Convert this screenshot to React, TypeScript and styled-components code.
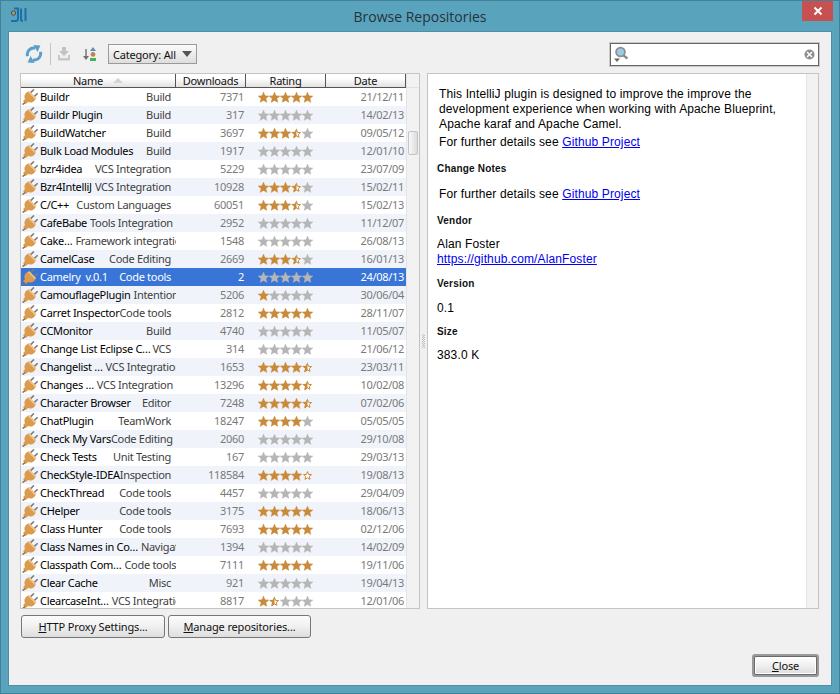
import React from 'react';
import styled, { createGlobalStyle } from 'styled-components';

interface Plugin {
  name: string;
  category: string;
  downloads: number;
  rating: number;
  date: string;
  tight?: boolean;
}

const plugins: Plugin[] = [
  { name: 'Buildr', category: 'Build', downloads: 7371, rating: 5, date: '21/12/11' },
  { name: 'Buildr Plugin', category: 'Build', downloads: 317, rating: 0, date: '14/02/13' },
  { name: 'BuildWatcher', category: 'Build', downloads: 3697, rating: 3.5, date: '09/05/12' },
  { name: 'Bulk Load Modules', category: 'Build', downloads: 1917, rating: 0, date: '12/01/10' },
  { name: 'bzr4idea', category: 'VCS Integration', downloads: 5229, rating: 0, date: '23/07/09' },
  { name: 'Bzr4IntelliJ', category: 'VCS Integration', downloads: 10928, rating: 3.5, date: '15/02/11' },
  { name: 'C/C++', category: 'Custom Languages', downloads: 60051, rating: 3.5, date: '15/02/13' },
  { name: 'CafeBabe', category: 'Tools Integration', downloads: 2952, rating: 0, date: '11/12/07' },
  { name: 'Cake…', category: 'Framework integration', downloads: 1548, rating: 0, date: '26/08/13' },
  { name: 'CamelCase', category: 'Code Editing', downloads: 2669, rating: 3.5, date: '16/01/13' },
  { name: 'Camelry  v.0.1', category: 'Code tools', downloads: 2, rating: 0, date: '24/08/13' },
  { name: 'CamouflagePlugin', category: 'Intention', downloads: 5206, rating: 1, date: '30/06/04' },
  { name: 'Carret Inspector', category: 'Code tools', downloads: 2812, rating: 5, date: '28/11/07', tight: true },
  { name: 'CCMonitor', category: 'Build', downloads: 4740, rating: 0, date: '11/05/07' },
  { name: 'Change List Eclipse C…', category: 'VCS', downloads: 314, rating: 0, date: '21/06/12', tight: true },
  { name: 'Changelist …', category: 'VCS Integration', downloads: 1653, rating: 4.5, date: '23/03/11' },
  { name: 'Changes …', category: 'VCS Integration', downloads: 13296, rating: 4.5, date: '10/02/08' },
  { name: 'Character Browser', category: 'Editor', downloads: 7248, rating: 4.5, date: '07/02/06' },
  { name: 'ChatPlugin', category: 'TeamWork', downloads: 18247, rating: 4, date: '05/05/05' },
  { name: 'Check My Vars', category: 'Code Editing', downloads: 2060, rating: 0, date: '29/10/08', tight: true },
  { name: 'Check Tests', category: 'Unit Testing', downloads: 167, rating: 0, date: '29/03/13' },
  { name: 'CheckStyle-IDEA', category: 'Inspection', downloads: 118584, rating: 4.25, date: '19/08/13', tight: true },
  { name: 'CheckThread', category: 'Code tools', downloads: 4457, rating: 0, date: '29/04/09' },
  { name: 'CHelper', category: 'Code tools', downloads: 3175, rating: 5, date: '18/06/13' },
  { name: 'Class Hunter', category: 'Code tools', downloads: 7693, rating: 5, date: '02/12/06' },
  { name: 'Class Names in Co…', category: 'Navigation', downloads: 1394, rating: 0, date: '14/02/09' },
  { name: 'Classpath Com…', category: 'Code tools', downloads: 7111, rating: 5, date: '19/11/06' },
  { name: 'Clear Cache', category: 'Misc', downloads: 921, rating: 0, date: '19/04/13' },
  { name: 'ClearcaseInt…', category: 'VCS Integration', downloads: 8817, rating: 1.5, date: '12/01/06' },
];

const GlobalStyle = createGlobalStyle`
  html, body {
    margin: 0;
    padding: 0;
    background: #5aa3bc;
  }
`;

const Frame = styled.div`
  width: 840px;
  height: 694px;
  box-sizing: border-box;
  display: flex;
  flex-direction: column;
  background: #5aa3bc;
  border: 1px solid #43809a;
  overflow: hidden;
`;

const TitleBar = styled.div`
  position: relative;
  height: 30px;
  flex: none;
  display: flex;
  align-items: center;
  justify-content: center;
  font: 14px 'Open Sans', sans-serif;
  color: #26343a;
`;

const AppIcon = styled.svg`
  position: absolute;
  left: 9px;
  top: 6px;
`;

const CloseCross = styled.button`
  position: absolute;
  right: 6px;
  top: 0;
  width: 31px;
  height: 20px;
  padding: 0;
  border: none;
  background: #c75050;
  display: flex;
  align-items: center;
  justify-content: center;
`;

const Client = styled.div`
  flex: 1;
  margin: 0 7px 7px;
  background: #f0f0f0;
  border: 1px solid #4d8da6;
  display: flex;
  flex-direction: column;
  min-height: 0;
  padding: 0 12px 8px 11px;
`;

const Toolbar = styled.div`
  height: 41px;
  flex: none;
  display: flex;
  align-items: center;
  padding: 3px 0 0 5px;
  box-sizing: border-box;
`;

const ToolIcon = styled.svg<{ $gap: number }>`
  margin-right: ${(p) => p.$gap}px;
  flex: none;
`;

const Divider = styled.div`
  width: 1px;
  height: 22px;
  background: #c4c4c4;
  margin-right: 6px;
`;

const CategorySelect = styled.div`
  width: 89px;
  height: 20px;
  box-sizing: border-box;
  border: 1px solid #9a9a9a;
  background: linear-gradient(#fbfbfb, #dedede);
  display: flex;
  align-items: center;
  justify-content: space-between;
  padding: 0 4px 0 4px;
  font: 11px 'Noto Sans', sans-serif;
  letter-spacing: -0.2px;
  color: #111;
`;

const Caret = styled.span`
  width: 0;
  height: 0;
  border-left: 5px solid transparent;
  border-right: 5px solid transparent;
  border-top: 6px solid #555;
`;

const SearchBox = styled.div`
  margin-left: auto;
  width: 209px;
  height: 23px;
  box-sizing: border-box;
  border: 1px solid #666;
  box-shadow: 0 0 0 1px #c8c8c8;
  background: #fff;
  display: flex;
  align-items: center;
  justify-content: space-between;
  padding: 0 3px 0 2px;
`;

const Body = styled.div`
  height: 536px;
  flex: none;
  display: flex;
`;

const ListPanel = styled.div`
  width: 400px;
  flex: none;
  box-sizing: border-box;
  border: 1px solid #c4c4c4;
  display: flex;
  overflow: hidden;
  background: #fff;
`;

const TableArea = styled.div`
  width: 385px;
  flex: none;
  overflow: hidden;
`;

const HeaderRow = styled.div`
  height: 13px;
  display: grid;
  grid-template-columns: 155px 70px 80px 80px;
  border-bottom: 1px solid #555;
`;

const HeaderCell = styled.div`
  box-sizing: border-box;
  background: linear-gradient(#ffffff 30%, #e2e2e2);
  border-right: 1px solid #555;
  display: flex;
  align-items: center;
  justify-content: center;
  gap: 10px;
  font: 11px/13px 'Noto Sans', sans-serif;
  letter-spacing: -0.25px;
  color: #111;
`;

const SortMark = styled.span`
  width: 0;
  height: 0;
  border-left: 5px solid transparent;
  border-right: 5px solid transparent;
  border-bottom: 5px solid #d4d4d4;
`;

const Row = styled.div<{ $alt: boolean; $selected: boolean }>`
  height: 18px;
  display: grid;
  grid-template-columns: 155px 70px 80px 80px;
  align-items: center;
  background: ${(p) => (p.$selected ? '#3875d7' : p.$alt ? '#f0f4fa' : '#fff')};
  font: 11px/18px 'Noto Sans', sans-serif;
  letter-spacing: -0.3px;
`;

const NameCell = styled.div<{ $selected: boolean }>`
  display: flex;
  align-items: center;
  justify-content: space-between;
  overflow: hidden;
  white-space: pre;
  padding-right: 5px;
  color: ${(p) => (p.$selected ? '#fff' : '#000')};
`;

const PluginName = styled.span<{ $tight: boolean }>`
  flex: none;
  margin-left: 2px;
  margin-right: ${(p) => (p.$tight ? 0 : 3)}px;
`;

const NameGroup = styled.span`
  flex: none;
  display: flex;
  align-items: center;
`;

const PlugIcon = styled.svg`
  margin-left: 1px;
  flex: none;
`;

const CategoryText = styled.span<{ $selected: boolean }>`
  flex: none;
  color: ${(p) => (p.$selected ? '#fff' : '#404040')};
`;

const NumberCell = styled.div<{ $selected: boolean }>`
  text-align: right;
  padding-right: 2px;
  color: ${(p) => (p.$selected ? '#fff' : '#7a7a7a')};
`;

const StarsCell = styled.div`
  display: flex;
  padding-left: 12px;
`;

const DateCell = styled.div<{ $selected: boolean }>`
  text-align: right;
  padding-right: 2px;
  color: ${(p) => (p.$selected ? '#fff' : '#7a7a7a')};
`;

const ScrollTrack = styled.div`
  flex: 1;
  background: #f2f2f2;
  border-left: 1px solid #e4e4e4;
  position: relative;
`;

const ScrollCap = styled.div`
  height: 13px;
  border-bottom: 1px solid #e2e2e2;
`;

const ScrollThumb = styled.div`
  position: absolute;
  left: 1px;
  top: 57px;
  width: 8px;
  height: 22px;
  border: 1px solid #c4c4c4;
  border-radius: 2px;
  background: linear-gradient(90deg, #f8f8f8, #dcdcdc);
`;

const Splitter = styled.div`
  width: 7px;
  flex: none;
  display: flex;
  align-items: center;
  justify-content: center;
`;

const SplitterGrip = styled.div`
  width: 3px;
  height: 14px;
  background: conic-gradient(#bdbdbd 25%, transparent 0 50%, #bdbdbd 0 75%, transparent 0) 0 0 / 2px 2px;
`;

const DetailPanel = styled.div`
  flex: 1;
  box-sizing: border-box;
  border: 1px solid #c4c4c4;
  background: #fff;
  display: flex;
`;

const DetailContent = styled.div`
  flex: 1;
  padding: 13px 9px 0;
  font: 12px/15px 'Liberation Sans', Arial, sans-serif;
  letter-spacing: 0.13px;
  color: #000;
`;

const Paragraph = styled.p<{ $top?: number; $indent?: number }>`
  margin: ${(p) => p.$top ?? 0}px 0 0 ${(p) => p.$indent ?? 0}px;
`;

const SectionTitle = styled.h4<{ $top: number }>`
  margin: ${(p) => p.$top}px 0 0;
  font: bold 10px/12px 'Liberation Sans', Arial, sans-serif;
  letter-spacing: 0.2px;
  color: #111;
`;

const Link = styled.a`
  color: #0000ee;
  text-decoration: underline;
`;

const DetailScroll = styled.div`
  width: 11px;
  background: #f2f2f2;
  border-left: 1px solid #e4e4e4;
`;

const ButtonRow = styled.div`
  display: flex;
  gap: 3px;
  margin: 6px 0 0 1px;
`;

const PushButton = styled.button<{ $width: number }>`
  width: ${(p) => p.$width}px;
  height: 23px;
  padding: 0;
  box-sizing: border-box;
  border: 1px solid #777;
  border-radius: 3px;
  background: linear-gradient(#fcfcfc, #f0f0f0 50%, #dedede);
  font: 11px 'Noto Sans', sans-serif;
  letter-spacing: -0.15px;
  color: #111;
`;

const Mnemonic = styled.span`
  text-decoration: underline;
`;

const Footer = styled.div`
  margin-top: auto;
  display: flex;
  justify-content: flex-end;
`;

const CloseButton = styled.button`
  width: 59px;
  height: 15px;
  margin: 0 3px 3px 0;
  padding: 0;
  box-sizing: content-box;
  border: 1px solid #fff;
  border-radius: 1px;
  box-shadow: 0 0 0 1px #6a6a6a, 0 0 0 3px #9a9a9a;
  background: linear-gradient(#fcfcfc, #f0f0f0 50%, #dedede);
  font: 11px/14px 'Noto Sans', sans-serif;
  letter-spacing: -0.15px;
  color: #111;
`;

const STAR = '5.5,.1 7.03,3.7 10.92,4.04 7.97,6.6 8.85,10.41 5.5,8.4 2.15,10.41 3.03,6.6 .08,4.04 3.97,3.7';
const HALF_STAR = '5.5,.1 5.5,8.4 2.15,10.41 3.03,6.6 .08,4.04 3.97,3.7';
const OUTLINE_STAR = '5.5,1.6 6.6,4.4 9.5,4.6 7.3,6.4 8,9.4 5.5,7.8 3,9.4 3.7,6.4 1.5,4.6 4.4,4.4';

const Star = ({ value }: { value: number }) => {
  const orange = '#c98b3b';
  return (
    <svg width="11" height="11" viewBox="0 0 11 11">
      {value >= 1 && <polygon points={STAR} fill={orange} stroke={orange} strokeWidth=".4" />}
      {value <= 0 && <polygon points={STAR} fill="#b6b6b6" stroke="#b6b6b6" strokeWidth=".4" />}
      {value > 0 && value < 1 && (
        <polygon points={OUTLINE_STAR} fill="#fff" stroke={orange} strokeWidth="1" />
      )}
      {value >= 0.5 && value < 1 && <polygon points={HALF_STAR} fill={orange} />}
    </svg>
  );
};

const Plug = () => (
  <PlugIcon width="16" height="16" viewBox="0 0 16 16">
    <path d="M8.6 3.6 12 .4M12.4 7.4l3.2-3.2" stroke="#7d7d7d" strokeWidth="1.6" fill="none" />
    <path
      d="M7.2 2.2 13.9 8.9c-.5 1.9-1.6 3.2-3.1 4-1.7.9-3.4.8-4.8.2L3.9 15 1.1 12.2 3 10c-.8-1.5-.8-3.2 0-4.6.9-1.6 2.4-2.6 4.2-3.2z"
      fill="#dc9a4c"
    />
    <path d="M7.2 2.2 13.9 8.9l-1 1.4-6.9-7z" fill="#efc48c" />
    <path d="M3 13.6.6 15.6" stroke="#8a6a45" strokeWidth="1.4" fill="none" />
  </PlugIcon>
);

export default function App() {
  return (
    <>
      <GlobalStyle />
      <Frame>
        <TitleBar>
          <AppIcon width="17" height="16" viewBox="0 0 17 16" fill="none">
            <circle cx="3.5" cy="6" r="2.2" fill="#d98a2b" stroke="#1c5f8c" />
            <path d="M1 14h4.5c1.6 0 2.5-1 2.5-2.5V1.5H4" stroke="#1c6fa8" strokeWidth="2" />
            <path d="M11 1.5v10.5c0 1 .6 2 2 2M15.5 1v13" stroke="#1c6fa8" strokeWidth="2" />
          </AppIcon>
          Browse Repositories
          <CloseCross aria-label="Close">
            <svg width="10" height="10" viewBox="0 0 10 10">
              <path d="M1.5 1.5 8.5 8.5M8.5 1.5 1.5 8.5" stroke="#fff" strokeWidth="2" />
            </svg>
          </CloseCross>
        </TitleBar>
        <Client>
          <Toolbar>
            <ToolIcon $gap={7} width="18" height="18" viewBox="0 0 18 18" fill="none">
              <path d="M2.6 11.2C1.2 6.4 5.4 2.2 10 3.2" stroke="#5a9ecb" strokeWidth="3" />
              <path d="M8.4 0l7 .6-3 6.4z" fill="#5a9ecb" />
              <path d="M15.4 6.8c1.4 4.8-2.8 9-7.4 8" stroke="#5a9ecb" strokeWidth="3" />
              <path d="M9.6 18l-7-.6 3-6.4z" fill="#5a9ecb" />
            </ToolIcon>
            <Divider />
            <ToolIcon $gap={11} width="14" height="16" viewBox="0 0 14 16" fill="none">
              <path d="M5 1h4v4h3L7 10 2 5h3z" fill="#c2c2c2" />
              <path d="M1 9v5.5h12V9h-2v3H3V9z" fill="#c8c8c8" />
            </ToolIcon>
            <ToolIcon $gap={11} width="15" height="16" viewBox="0 0 15 16" fill="none">
              <path d="M4 3v10" stroke="#707070" strokeWidth="1.4" />
              <path d="M1 10l3 4 3-4z" fill="#707070" />
              <path d="M11 1l3 4H8z" fill="#5a8fc0" />
              <circle cx="11" cy="8.4" r="2.4" fill="#b98a4a" />
              <rect x="8" y="12" width="6" height="3" fill="#4aae5a" />
            </ToolIcon>
            <CategorySelect>
              Category: All
              <Caret />
            </CategorySelect>
            <SearchBox>
              <svg width="16" height="17" viewBox="0 0 16 17" fill="none">
                <circle cx="7.5" cy="6" r="4.4" fill="#9ccbe6" stroke="#8e8e8e" strokeWidth="1.8" />
                <path d="M10.5 9.5 14.5 12.5" stroke="#8a8a8a" strokeWidth="2.2" />
                <path d="M1 12.5h6L4 16z" fill="#666" />
              </svg>
              <svg width="11" height="11" viewBox="0 0 11 11">
                <circle cx="5.5" cy="5.5" r="5" fill="#8e8e8e" />
                <path d="M3 3l5 5M8 3 3 8" stroke="#fff" strokeWidth="1.5" />
              </svg>
            </SearchBox>
          </Toolbar>
          <Body>
            <ListPanel>
              <TableArea>
                <HeaderRow>
                  <HeaderCell>
                    Name
                    <SortMark />
                  </HeaderCell>
                  <HeaderCell>Downloads</HeaderCell>
                  <HeaderCell>Rating</HeaderCell>
                  <HeaderCell>Date</HeaderCell>
                </HeaderRow>
                {plugins.map((plugin, index) => {
                  const selected = plugin.name.startsWith('Camelry');
                  return (
                    <Row key={plugin.name} $alt={index % 2 === 1} $selected={selected}>
                      <NameCell $selected={selected}>
                        <NameGroup>
                          <Plug />
                          <PluginName $tight={!!plugin.tight}>{plugin.name}</PluginName>
                        </NameGroup>
                        <CategoryText $selected={selected}>{plugin.category}</CategoryText>
                      </NameCell>
                      <NumberCell $selected={selected}>{plugin.downloads}</NumberCell>
                      <StarsCell>
                        {[0, 1, 2, 3, 4].map((i) => (
                          <Star key={i} value={plugin.rating - i} />
                        ))}
                      </StarsCell>
                      <DateCell $selected={selected}>{plugin.date}</DateCell>
                    </Row>
                  );
                })}
              </TableArea>
              <ScrollTrack>
                <ScrollCap />
                <ScrollThumb />
              </ScrollTrack>
            </ListPanel>
            <Splitter>
              <SplitterGrip />
            </Splitter>
            <DetailPanel>
              <DetailContent>
                <Paragraph $indent={2}>
                  This IntelliJ plugin is designed to improve the improve the
                  <br />
                  development experience when working with Apache Blueprint,
                  <br />
                  Apache karaf and Apache Camel.
                </Paragraph>
                <Paragraph $top={3} $indent={2}>
                  For further details see <Link href="#">Github Project</Link>
                </Paragraph>
                <SectionTitle $top={13}>Change Notes</SectionTitle>
                <Paragraph $top={12} $indent={2}>
                  For further details see <Link href="#">Github Project</Link>
                </Paragraph>
                <SectionTitle $top={13}>Vendor</SectionTitle>
                <Paragraph $top={10}>Alan Foster</Paragraph>
                <Paragraph>
                  <Link href="#">https://github.com/AlanFoster</Link>
                </Paragraph>
                <SectionTitle $top={11}>Version</SectionTitle>
                <Paragraph $top={11}>0.1</Paragraph>
                <SectionTitle $top={10}>Size</SectionTitle>
                <Paragraph $top={10}>383.0 K</Paragraph>
              </DetailContent>
              <DetailScroll />
            </DetailPanel>
          </Body>
          <ButtonRow>
            <PushButton $width={144}>
              <Mnemonic>H</Mnemonic>TTP Proxy Settings...
            </PushButton>
            <PushButton $width={143}>
              <Mnemonic>M</Mnemonic>anage repositories...
            </PushButton>
          </ButtonRow>
          <Footer>
            <CloseButton>
              <Mnemonic>C</Mnemonic>lose
            </CloseButton>
          </Footer>
        </Client>
      </Frame>
    </>
  );
}
